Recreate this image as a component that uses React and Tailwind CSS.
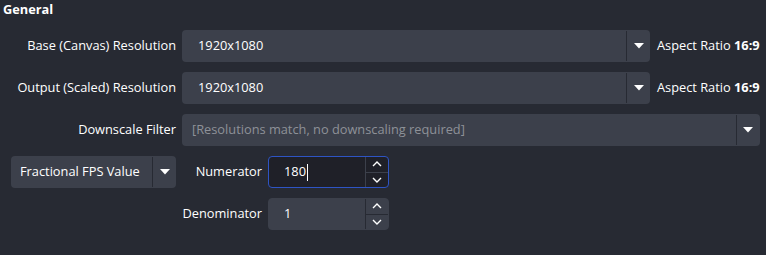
import React from "react";

const Tri = () => (
  <svg width="10" height="6" viewBox="0 0 10 6" className="block">
    <polygon points="0,0 10,0 5,5.5" fill="#ffffff" />
  </svg>
);

const Up = () => (
  <svg width="10" height="6" viewBox="0 0 10 6" className="block">
    <polyline points="1,5 5,1 9,5" fill="none" stroke="#ffffff" strokeWidth="1.4" />
  </svg>
);
const Down = () => (
  <svg width="10" height="6" viewBox="0 0 10 6" className="block">
    <polyline points="1,1 5,5 9,1" fill="none" stroke="#ffffff" strokeWidth="1.4" />
  </svg>
);

function Combo({ text, pl = "pl-4", muted = false, className = "" }) {
  return (
    <div className={`h-[32px] flex items-stretch rounded-[4px] bg-[#3c404b] ${className}`}>
      <div className={`flex-1 flex items-center ${pl} ${muted ? "text-[#8e9198]" : "text-white"} whitespace-nowrap`}>
        {text}
      </div>
      <div className="w-[1px] my-[1px] bg-[#272a33]" />
      <div className="w-[23px] flex items-center justify-center">
        <Tri />
      </div>
    </div>
  );
}

function Spin({ value, focused = false }) {
  return (
    <div
      className={`w-[121px] h-[32px] flex items-stretch rounded-[4px] border ${
        focused ? "border-[#2e54c4] bg-[#1f2028]" : "border-[#3c404b] bg-[#3c404b]"
      }`}
    >
      <div className="flex-1 flex items-center pl-[15px] text-white">
        {value}
        {focused && <span className="inline-block w-[1px] h-[17px] bg-white ml-[1px]" />}
      </div>
      <div className={`w-[1px] ${focused ? "bg-[#3c404b]" : "bg-[#272a33]"}`} />
      <div className="w-[22px] flex flex-col">
        <div className="flex-1 flex items-center justify-center">
          <Up />
        </div>
        <div className={`h-[1px] ${focused ? "bg-[#3c404b]" : "bg-[#272a33]"}`} />
        <div className="flex-1 flex items-center justify-center">
          <Down />
        </div>
      </div>
    </div>
  );
}

export default function App() {
  return (
    <div
      className="w-[766px] h-[255px] bg-[#272a33] text-white text-[12.8px] overflow-hidden"
      style={{ fontFamily: '"Open Sans", "Noto Sans", sans-serif' }}
    >
      <div className="pl-[3px] pt-[0px] h-[19px] leading-[19px] font-bold">General</div>
      <div className="mt-[11px] pr-[8px] grid grid-cols-[176px_1fr] gap-x-[6px] gap-y-[10px]">
        <div className="h-[32px] flex items-center justify-end">Base (Canvas) Resolution</div>
        <div className="flex items-center">
          <Combo text="1920x1080" className="w-[468px]" />
          <div className="ml-[7px] whitespace-nowrap">
            Aspect Ratio <span className="font-bold">16:9</span>
          </div>
        </div>

        <div className="h-[32px] flex items-center justify-end">Output (Scaled) Resolution</div>
        <div className="flex items-center">
          <Combo text="1920x1080" className="w-[468px]" />
          <div className="ml-[7px] whitespace-nowrap">
            Aspect Ratio <span className="font-bold">16:9</span>
          </div>
        </div>

        <div className="h-[32px] flex items-center justify-end">Downscale Filter</div>
        <Combo text="[Resolutions match, no downscaling required]" pl="pl-[10px]" muted />

        <div className="flex justify-end items-start">
          <Combo text="Fractional FPS Value" pl="pl-[9px]" className="w-[165px]" />
        </div>
        <div className="grid grid-cols-[80px_auto] justify-start gap-x-[6px] gap-y-[10px]">
          <div className="h-[32px] flex items-center justify-end">Numerator</div>
          <Spin value="180" focused />
          <div className="h-[32px] flex items-center justify-end">Denominator</div>
          <Spin value="1" />
        </div>
      </div>
    </div>
  );
}
